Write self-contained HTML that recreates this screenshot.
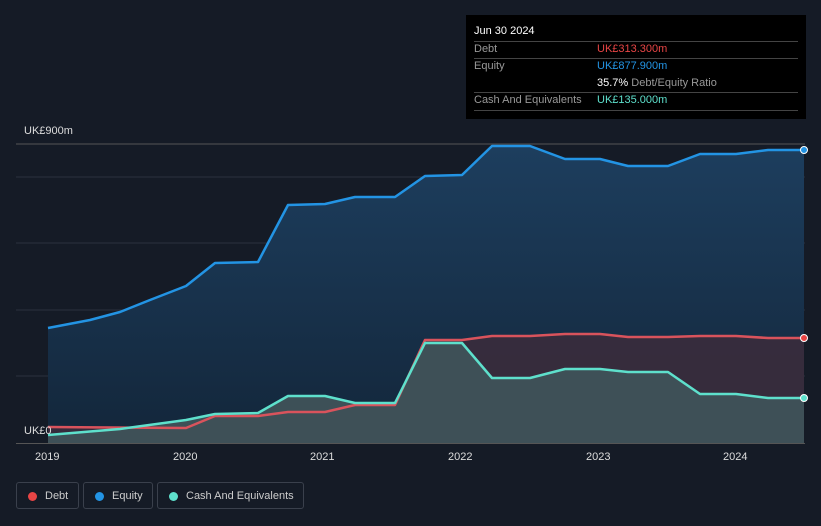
<!DOCTYPE html><html><head><style>
body{margin:0;width:821px;height:526px;background:#151b26;font-family:"Liberation Sans",sans-serif;overflow:hidden;position:relative}
.tip{position:absolute;left:466px;top:15px;width:340px;height:104px;background:#000;font-size:11px;color:#fff}
.r{position:absolute;left:8px;width:324px;border-top:1px solid #444}
.l{position:absolute;left:8px;color:#999}
.v{position:absolute;left:131px}
.leg{position:absolute;top:482px;height:27px;border:1px solid #3a404c;border-radius:3px;color:#ccc;font-size:11px;line-height:27px;box-sizing:border-box}
.leg i{position:absolute;left:11px;top:9px;width:9px;height:9px;border-radius:50%}
.ax{position:absolute;top:451px;color:#ddd;font-size:11px}
</style></head><body>
<svg width="821" height="526" style="position:absolute;left:0;top:0">
<defs><linearGradient id="g" x1="0" y1="0" x2="0" y2="1"><stop offset="0" stop-color="#1d3e5e"/><stop offset="1" stop-color="#13263a"/></linearGradient></defs>
<g stroke="#2a313d" stroke-width="1"><line x1="16" y1="144" x2="805" y2="144" stroke="#555"/><line x1="16" y1="177" x2="805" y2="177"/><line x1="16" y1="243" x2="805" y2="243"/><line x1="16" y1="310" x2="805" y2="310"/><line x1="16" y1="376" x2="805" y2="376"/></g>
<polygon fill="url(#g)" points="48,328 90,320 120,312 150,300 186,286 215,263 258,262 288,205 325,204 355,197 395,197 425,176 462,175 492,146 530,146 565,159 600,159 628,166 668,166 700,154 736,154 768,150 804,150 804,443 48,443"/>
<polygon fill="#3a2c3c" opacity="0.9" points="48,427 186,428 215,416 258,416 288,412 325,412 355,405 395,405 425,340 462,340 492,336 530,336 565,334 600,334 628,337 668,337 700,336 736,336 768,338 804,338 804,443 48,443"/>
<polygon fill="#3f5258" opacity="0.95" points="48,435 120,429 186,420 215,414 258,413 288,396 325,396 355,403 395,403 425,343 462,343 492,378 530,378 565,369 600,369 628,372 668,372 700,394 736,394 768,398 804,398 804,443 48,443"/>
<g fill="none" stroke-width="2.5" stroke-linejoin="round">
<polyline stroke="#2394e4" points="48,328 90,320 120,312 150,300 186,286 215,263 258,262 288,205 325,204 355,197 395,197 425,176 462,175 492,146 530,146 565,159 600,159 628,166 668,166 700,154 736,154 768,150 804,150"/>
<polyline stroke="#d9535c" points="48,427 186,428 215,416 258,416 288,412 325,412 355,405 395,405 425,340 462,340 492,336 530,336 565,334 600,334 628,337 668,337 700,336 736,336 768,338 804,338"/>
<polyline stroke="#5ee0cc" points="48,435 120,429 186,420 215,414 258,413 288,396 325,396 355,403 395,403 425,343 462,343 492,378 530,378 565,369 600,369 628,372 668,372 700,394 736,394 768,398 804,398"/>
</g>
<line x1="16" y1="443.5" x2="805" y2="443.5" stroke="#555"/>
<circle cx="804" cy="150" r="3.5" fill="#2394e4" stroke="#fff"/><circle cx="804" cy="338" r="3.5" fill="#e84545" stroke="#fff"/><circle cx="804" cy="398" r="3.5" fill="#5ee0cc" stroke="#fff"/>
</svg>
<div style="position:absolute;left:24px;top:125px;color:#ddd;font-size:11px">UK£900m</div>
<div style="position:absolute;left:24px;top:425px;color:#ddd;font-size:11px">UK£0</div>
<div class="ax" style="left:35px">2019</div><div class="ax" style="left:173px">2020</div><div class="ax" style="left:310px">2021</div><div class="ax" style="left:448px">2022</div><div class="ax" style="left:586px">2023</div><div class="ax" style="left:723px">2024</div>
<div class="tip">
<div style="position:absolute;left:8px;top:10px">Jun 30 2024</div>
<div class="r" style="top:26px"></div><div class="l" style="top:28px">Debt</div><div class="v" style="top:28px;color:#e84545">UK£313.300m</div>
<div class="r" style="top:43px"></div><div class="l" style="top:45px">Equity</div><div class="v" style="top:45px;color:#2394e4">UK£877.900m</div>
<div class="v" style="top:62px;color:#999"><b style="color:#fff;font-weight:normal">35.7%</b> Debt/Equity Ratio</div>
<div class="r" style="top:77px"></div><div class="l" style="top:79px">Cash And Equivalents</div><div class="v" style="top:79px;color:#5ee0cc">UK£135.000m</div>
<div class="r" style="top:95px"></div>
</div>
<div class="leg" style="left:16px;width:63px"><i style="background:#e84545"></i><span style="margin-left:28px">Debt</span></div>
<div class="leg" style="left:83px;width:70px"><i style="background:#2394e4"></i><span style="margin-left:28px">Equity</span></div>
<div class="leg" style="left:157px;width:147px"><i style="background:#5ee0cc"></i><span style="margin-left:28px">Cash And Equivalents</span></div>
</body></html>
